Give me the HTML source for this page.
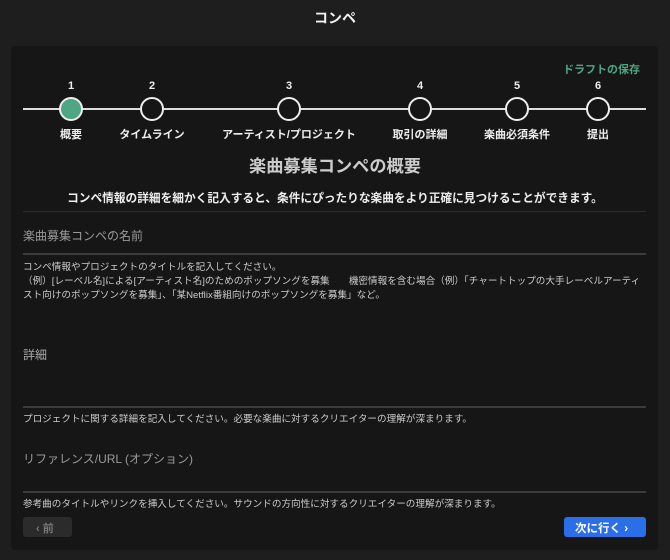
<!DOCTYPE html>
<html><head><meta charset="utf-8"><style>
*{margin:0;padding:0;box-sizing:border-box}
body{width:670px;height:560px;background:#1e1e1e;font-family:"Liberation Sans","Noto Sans CJK JP",sans-serif;color:#ddd;position:relative;overflow:hidden}
.a{position:absolute;white-space:nowrap}
.card{position:absolute;left:11px;top:46px;width:647px;height:504px;background:#161616;border-radius:4px}
.line{position:absolute;left:23px;width:623px;height:2px;background:#3c3c3c}
.c{position:absolute;width:24px;height:24px;border:2px solid #eee;border-radius:50%;background:#161616;top:97px}
.n{position:absolute;top:80px;font-size:11px;font-weight:bold;color:#eee;width:30px;text-align:center}
.l{position:absolute;top:126px;font-size:11px;font-weight:bold;color:#eee;transform:translateX(-50%)}
.help{font-size:9.6px;color:#ccc;line-height:14px}
</style></head><body>
<div class="a" style="left:0;width:670px;top:8px;text-align:center;font-size:14px;font-weight:bold;color:#f2f2f2">コンペ</div>
<div class="card"></div>
<div class="a" style="left:563px;top:61px;font-size:11px;font-weight:bold;color:#4ea684">ドラフトの保存</div>
<div class="a" style="left:23px;top:108px;width:623px;height:2px;background:#ddd"></div>
<div class="c" style="left:59px;background:#4ea684"></div>
<div class="c" style="left:140px"></div>
<div class="c" style="left:277px"></div>
<div class="c" style="left:408px"></div>
<div class="c" style="left:505px"></div>
<div class="c" style="left:586px"></div>
<div class="n" style="left:56px">1</div><div class="n" style="left:137px">2</div><div class="n" style="left:274px">3</div><div class="n" style="left:405px">4</div><div class="n" style="left:502px">5</div><div class="n" style="left:583px">6</div>
<div class="l" style="left:71px">概要</div>
<div class="l" style="left:152px">タイムライン</div>
<div class="l" style="left:289px">アーティスト/プロジェクト</div>
<div class="l" style="left:420px">取引の詳細</div>
<div class="l" style="left:517px">楽曲必須条件</div>
<div class="l" style="left:598px">提出</div>
<div class="a" style="left:0;width:670px;top:152px;text-align:center;font-size:17.2px;font-weight:bold;color:#ccc">楽曲募集コンペの概要</div>
<div class="a" style="left:0;width:670px;top:189px;text-align:center;font-size:11.7px;font-weight:bold;color:#eee">コンペ情報の詳細を細かく記入すると、条件にぴったりな楽曲をより正確に見つけることができます。</div>
<div class="line" style="top:211px;height:1px;background:#2c2c2c"></div>
<div class="a" style="left:23px;top:227px;font-size:12px;color:#999">楽曲募集コンペの名前</div>
<div class="line" style="top:253px"></div>
<div class="a help" style="left:23px;top:261px">コンペ情報やプロジェクトのタイトルを記入してください。<br>（例）[レーベル名]による[アーティスト名]のためのポップソングを募集　　機密情報を含む場合（例）「チャートトップの大手レーベルアーティ<br>スト向けのポップソングを募集」、「某Netflix番組向けのポップソングを募集」など。</div>
<div class="a" style="left:23px;top:346px;font-size:12px;color:#aaa">詳細</div>
<div class="line" style="top:406px"></div>
<div class="a help" style="left:23px;top:413px">プロジェクトに関する詳細を記入してください。必要な楽曲に対するクリエイターの理解が深まります。</div>
<div class="a" style="left:23px;top:450px;font-size:12px;color:#999">リファレンス/URL (オプション)</div>
<div class="line" style="top:491px"></div>
<div class="a help" style="left:23px;top:498px">参考曲のタイトルやリンクを挿入してください。サウンドの方向性に対するクリエイターの理解が深まります。</div>
<div class="a" style="left:23px;top:517px;width:49px;height:20px;background:#2b2b2b;border-radius:3px;font-size:11px;font-weight:bold;color:#777;padding:3px 0 0 13px">‹ 前</div>
<div class="a" style="left:564px;top:517px;width:82px;height:20px;background:#2b6fe8;border-radius:3px;font-size:11.5px;font-weight:bold;color:#fff;padding:3px 0 0 11px">次に行く ›</div>
</body></html>
